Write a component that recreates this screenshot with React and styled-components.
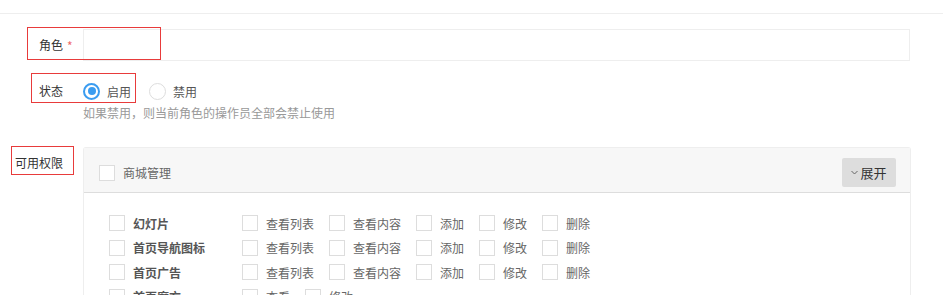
import React from 'react';
import styled, { createGlobalStyle } from 'styled-components';

const GlobalStyle = createGlobalStyle`
    html, body {
        margin: 0;
        padding: 0;
        background: #fff;
        font-family: "Noto Sans CJK SC", "Noto Sans", sans-serif;
        font-size: 12px;
        color: #333;
    }
`;

const Page = styled.div`
    position: relative;
    width: 943px;
    height: 295px;
    overflow: hidden;
`;

const TopBar = styled.div`
    height: 13px;
    border-bottom: 1px solid #eee;
`;

const Form = styled.div`
    padding-top: 15px;
`;

const FormRow = styled.div`
    display: flex;
    align-items: ${props => props.alignTop ? 'flex-start' : 'center'};
    margin-bottom: ${props => props.gap || 0}px;
`;

const Label = styled.div`
    position: relative;
    width: 63px;
    padding-right: 20px;
    text-align: right;
    line-height: 32px;
    color: #333;
    flex-shrink: 0;
    ${props => props.offsetTop && `margin-top: ${props.offsetTop}px;`}

    .required {
        position: absolute;
        left: 67px;
        top: 1px;
        color: #f06a6a;
        font-size: 12px;
    }
`;

const Input = styled.div`
    width: 825px;
    height: 30px;
    border: 1px solid #eee;
`;

const Field = styled.div`
    display: flex;
    flex-direction: column;
`;

const RadioGroup = styled.div`
    display: flex;
    align-items: center;
    height: 32px;
`;

const RadioItem = styled.label`
    display: flex;
    align-items: center;
    margin-right: 18px;
    color: #555;
`;

const RadioDot = styled.span`
    box-sizing: border-box;
    width: 17px;
    height: 17px;
    margin-right: 7px;
    border-radius: 50%;
    border: ${props => props.checked ? '2.5px solid #3a9cf0' : '1px solid #ddd'};
    display: flex;
    align-items: center;
    justify-content: center;

    &:after {
        content: "";
        display: ${props => props.checked ? 'block' : 'none'};
        width: 8px;
        height: 8px;
        border-radius: 50%;
        background: #3a9cf0;
    }
`;

const Hint = styled.div`
    color: #999;
    line-height: 14px;
    margin-top: -1px;
`;

const Panel = styled.div`
    width: 826px;
    border: 1px solid #eee;
    border-bottom: none;
    border-radius: 3px 3px 0 0;
    height: 160px;
`;

const PanelHeader = styled.div`
    box-sizing: border-box;
    display: flex;
    align-items: center;
    justify-content: space-between;
    height: 45px;
    padding: 5px 14px 0 15px;
    background: #f7f7f7;
    border-bottom: 1px solid #ddd;
    color: #666;
`;

const HeaderTitle = styled.div`
    display: flex;
    align-items: center;
`;

const Box = styled.span`
    box-sizing: border-box;
    display: inline-block;
    width: 16px;
    height: 16px;
    background: #fff;
    border: 1px solid #ddd;
    margin-right: 8px;
    flex-shrink: 0;
`;

const ExpandButton = styled.div`
    display: flex;
    align-items: center;
    justify-content: center;
    width: 54px;
    height: 29px;
    background: #ddd;
    border-radius: 2px;
    color: #333;
    font-size: 13px;

    svg {
        margin-right: 2px;
    }
`;

const PanelBody = styled.div`
    padding: 18px 0 0 25px;
`;

const PermRow = styled.div`
    display: flex;
    align-items: center;
    height: 24.5px;
`;

const ModuleName = styled.div`
    display: flex;
    align-items: center;
    width: 133px;
    font-weight: bold;
    color: #555;
`;

const PermItem = styled.div`
    display: flex;
    align-items: center;
    margin-right: 15px;
    color: #666;
`;

const Annotation = styled.div`
    position: absolute;
    border: 1px solid #e83b3b;
    pointer-events: none;
`;

const rows = [
    { name: '幻灯片', perms: ['查看列表', '查看内容', '添加', '修改', '删除'] },
    { name: '首页导航图标', perms: ['查看列表', '查看内容', '添加', '修改', '删除'] },
    { name: '首页广告', perms: ['查看列表', '查看内容', '添加', '修改', '删除'] },
    { name: '首页魔方', perms: ['查看', '修改'] },
];

const Chevron = () => (
    <svg width="7" height="5" viewBox="0 0 7 5">
        <path d="M0.5 1 L3.5 4 L6.5 1" fill="none" stroke="#666" strokeWidth="1" />
    </svg>
);

export default function App() {
    return (
        <Page>
            <GlobalStyle />
            <TopBar />
            <Form>
                <FormRow gap={14}>
                    <Label>角色<span className="required">*</span></Label>
                    <Input />
                </FormRow>
                <FormRow alignTop gap={27}>
                    <Label>状态</Label>
                    <Field>
                        <RadioGroup>
                            <RadioItem><RadioDot checked />启用</RadioItem>
                            <RadioItem><RadioDot />禁用</RadioItem>
                        </RadioGroup>
                        <Hint>如果禁用，则当前角色的操作员全部会禁止使用</Hint>
                    </Field>
                </FormRow>
                <FormRow alignTop>
                    <Label offsetTop={0}>可用权限</Label>
                    <Panel>
                        <PanelHeader>
                            <HeaderTitle><Box />商城管理</HeaderTitle>
                            <ExpandButton><Chevron />展开</ExpandButton>
                        </PanelHeader>
                        <PanelBody>
                            {rows.map(row => (
                                <PermRow key={row.name}>
                                    <ModuleName><Box />{row.name}</ModuleName>
                                    {row.perms.map(p => (
                                        <PermItem key={p}><Box />{p}</PermItem>
                                    ))}
                                </PermRow>
                            ))}
                        </PanelBody>
                    </Panel>
                </FormRow>
            </Form>
            <Annotation style={{ left: 27, top: 27, width: 132, height: 31 }} />
            <Annotation style={{ left: 31, top: 73, width: 103, height: 28 }} />
            <Annotation style={{ left: 11, top: 146, width: 61, height: 27 }} />
        </Page>
    );
}
